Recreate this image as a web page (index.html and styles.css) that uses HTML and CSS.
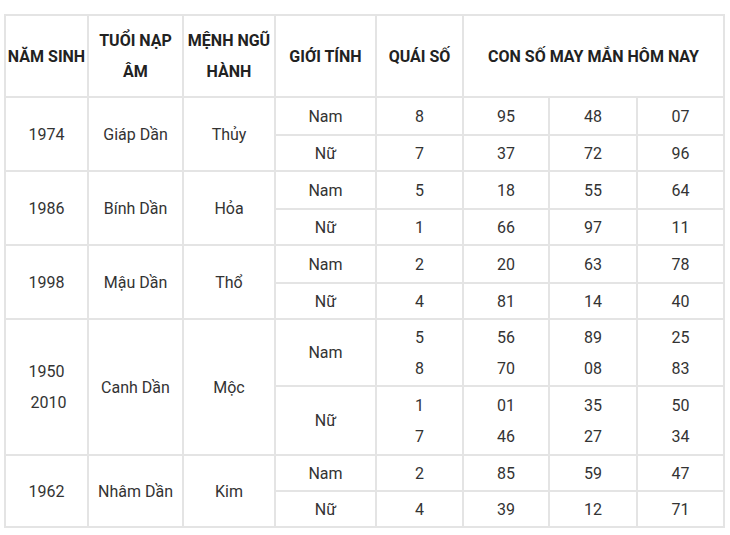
FILE: index.html
```html
<!DOCTYPE html>
<html lang="vi">
<head>
<meta charset="utf-8">
<title>Con số may mắn</title>
<link rel="stylesheet" href="styles.css">
</head>
<body>
<table class="lucky">
  <colgroup>
    <col class="c1"><col class="c2"><col class="c3"><col class="c4"><col class="c5"><col class="c6"><col class="c7"><col class="c8">
  </colgroup>
  <thead>
    <tr class="head">
      <th class="nowrap">NĂM SINH</th>
      <th>TUỔI NẠP<br>ÂM</th>
      <th>MỆNH NGŨ<br>HÀNH</th>
      <th>GIỚI TÍNH</th>
      <th>QUÁI SỐ</th>
      <th colspan="3">CON SỐ MAY MẮN HÔM NAY</th>
    </tr>
  </thead>
  <tbody>
    <tr class="r1"><td rowspan="2">1974</td><td rowspan="2">Giáp Dần</td><td rowspan="2">Thủy</td><td>Nam</td><td>8</td><td>95</td><td>48</td><td>07</td></tr>
    <tr class="r2"><td>Nữ</td><td>7</td><td>37</td><td>72</td><td>96</td></tr>
    <tr class="r1"><td rowspan="2">1986</td><td rowspan="2">Bính Dần</td><td rowspan="2">Hỏa</td><td>Nam</td><td>5</td><td>18</td><td>55</td><td>64</td></tr>
    <tr class="r2"><td>Nữ</td><td>1</td><td>66</td><td>97</td><td>11</td></tr>
    <tr class="r1"><td rowspan="2">1998</td><td rowspan="2">Mậu Dần</td><td rowspan="2">Thổ</td><td>Nam</td><td>2</td><td>20</td><td>63</td><td>78</td></tr>
    <tr class="r2"><td>Nữ</td><td>4</td><td>81</td><td>14</td><td>40</td></tr>
    <tr class="rd1"><td rowspan="2">1950<br>&nbsp;2010</td><td rowspan="2">Canh Dần</td><td rowspan="2">Mộc</td><td>Nam</td><td>5<br>8</td><td>56<br>70</td><td>89<br>08</td><td>25<br>83</td></tr>
    <tr class="rd2"><td>Nữ</td><td>1<br>7</td><td>01<br>46</td><td>35<br>27</td><td>50<br>34</td></tr>
    <tr class="r3"><td rowspan="2">1962</td><td rowspan="2">Nhâm Dần</td><td rowspan="2">Kim</td><td>Nam</td><td>2</td><td>85</td><td>59</td><td>47</td></tr>
    <tr class="r2"><td>Nữ</td><td>4</td><td>39</td><td>12</td><td>71</td></tr>
  </tbody>
</table>
</body>
</html>
```

FILE: styles.css
```css
html, body {
  margin: 0;
  padding: 0;
  background: #ffffff;
}
body {
  font-family: Roboto, "Liberation Sans", Arial, sans-serif;
  font-size: 16px;
  color: #333333;
}
.lucky {
  border-collapse: collapse;
  margin: 14px 0 0 4px;
  table-layout: fixed;
  width: 719px;
}
.c1 { width: 83px; }
.c2 { width: 95px; }
.c3 { width: 92px; }
.c4 { width: 101px; }
.c5 { width: 87px; }
.c6 { width: 86px; }
.c7 { width: 88px; }
.c8 { width: 87px; }
.lucky th,
.lucky td {
  border: 2px solid #e4e4e4;
  padding: 0 1px;
  text-align: center;
  vertical-align: middle;
  line-height: 31px;
}
.lucky th {
  font-weight: 700;
  color: #222222;
}
.lucky th.nowrap {
  white-space: nowrap;
  padding: 0;
}
.head { height: 82px; }
.r1 { height: 38px; }
.r2 { height: 36px; }
.r3 { height: 36px; }
.rd1 { height: 67px; }
.rd2 { height: 69px; }
```
